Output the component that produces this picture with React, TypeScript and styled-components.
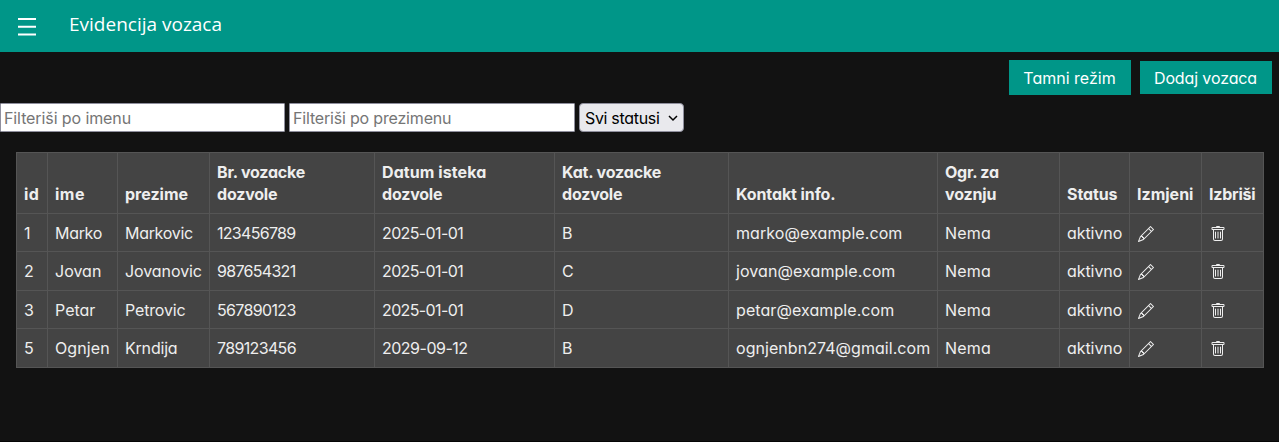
import React from "react";
import styled, { createGlobalStyle } from "styled-components";
import { BsPencil, BsTrash } from "react-icons/bs";

const GlobalStyle = createGlobalStyle`
  * { box-sizing: border-box; }
  body {
    margin: 0;
    background: #121212;
    color: #eee;
    font-family: Inter, "Open Sans", sans-serif;
    font-size: 16px;
    font-feature-settings: "cv11";
  }
`;

const Page = styled.div`
  min-height: 442px;
  border-bottom: 1px solid #060606;
`;

const Header = styled.header`
  display: flex;
  align-items: center;
  height: 52px;
  padding-left: 18px;
  background: #009688;
  color: #fff;
`;

const MenuButton = styled.button`
  display: flex;
  width: 18px;
  height: 18px;
  margin: 1px 33px 0 0;
  padding: 0;
  border: 0;
  background: none;
  color: inherit;
`;

const Title = styled.h1`
  margin: 0 0 5px;
  font: 400 19px/26px "Open Sans", sans-serif;
`;

const Actions = styled.div`
  display: flex;
  justify-content: flex-end;
  align-items: center;
  gap: 9px;
  height: 51px;
  padding-right: 7px;
`;

const ActionButton = styled.button<{ $w: number; $h: number; $track?: number }>`
  width: ${(p) => p.$w}px;
  height: ${(p) => p.$h}px;
  padding: 0 1px 0 0;
  border: 0;
  background: #009688;
  color: #fff;
  font: inherit;
  font-feature-settings: inherit;
  letter-spacing: ${(p) => p.$track ?? 0}px;
`;

const Filters = styled.div`
  display: flex;
  gap: 4px;
  height: 29px;
`;

const FilterInput = styled.input<{ $w: number; $track: number }>`
  width: ${(p) => p.$w}px;
  height: 29px;
  padding: 0 2px 0 3px;
  border: 1px solid #8f8f9d;
  border-radius: 1px;
  background: #fff;
  color: #000;
  font: inherit;
  font-feature-settings: inherit;
  letter-spacing: ${(p) => p.$track}px;
  &::placeholder { color: #757575; opacity: 1; }
`;

const StatusSelect = styled.button`
  display: flex;
  align-items: center;
  justify-content: space-between;
  width: 105px;
  height: 29px;
  padding: 0 5px;
  border: 1px solid #8f8f9d;
  border-radius: 4px;
  background: #e9e9ed;
  color: #000;
  font: inherit;
  font-feature-settings: inherit;
  letter-spacing: -0.32px;
`;

const Table = styled.table`
  width: 1248px;
  margin: 20px 0 0 16px;
  table-layout: fixed;
  border-collapse: collapse;
  background: #444;
`;

const Col = styled.col<{ $w: number }>`
  width: ${(p) => p.$w}px;
`;

const Row = styled.tr<{ $h: number }>`
  height: ${(p) => p.$h}px;
`;

const HeadCell = styled.th`
  padding: 0 0 8px 7px;
  border: 1px solid #555;
  text-align: left;
  vertical-align: bottom;
  font-weight: 700;
  line-height: 22px;
  white-space: nowrap;
`;

const Cell = styled.td`
  padding: 0 0 0 7px;
  border: 1px solid #555;
  vertical-align: middle;
  line-height: 22px;
  white-space: nowrap;
`;

const Text = styled.span<{ $track: number }>`
  display: block;
  letter-spacing: ${(p) => p.$track}px;
`;

const IconSlot = styled.span`
  display: flex;
  padding: 2px 0 0 1px;
`;

type Piece = [text: string, track: number];

const columns: { width: number; lines: Piece[] }[] = [
  { width: 31, lines: [["id", 0.4]] },
  { width: 70, lines: [["ime", 0.5]] },
  { width: 92, lines: [["prezime", 0]] },
  { width: 165, lines: [["Br. vozacke", -0.2], ["dozvole", -0.2]] },
  { width: 180, lines: [["Datum isteka", 0.08], ["dozvole", -0.2]] },
  { width: 174, lines: [["Kat. vozacke", -0.17], ["dozvole", -0.2]] },
  { width: 209, lines: [["Kontakt info.", -0.1]] },
  { width: 122, lines: [["Ogr. za", -0.25], ["voznju", -0.15]] },
  { width: 70, lines: [["Status", -0.1]] },
  { width: 72, lines: [["Izmjeni", 0]] },
  { width: 62, lines: [["Izbriši", -0.25]] },
];

const drivers: { height: number; cells: Piece[] }[] = [
  { height: 38, cells: [["1", 0], ["Marko", -0.3], ["Markovic", -0.3], ["123456789", -0.7], ["2025-01-01", -0.62], ["B", 0], ["marko@example.com", 0.08], ["Nema", 0.2], ["aktivno", -0.07]] },
  { height: 39, cells: [["2", 0], ["Jovan", 0], ["Jovanovic", -0.08], ["987654321", -0.7], ["2025-01-01", -0.62], ["C", 0], ["jovan@example.com", 0.08], ["Nema", 0.2], ["aktivno", -0.07]] },
  { height: 38, cells: [["3", 0], ["Petar", 0], ["Petrovic", -0.16], ["567890123", -0.65], ["2025-01-01", -0.62], ["D", 0], ["petar@example.com", 0.08], ["Nema", 0.2], ["aktivno", -0.07]] },
  { height: 39, cells: [["5", 0], ["Ognjen", 0.1], ["Krndija", -0.2], ["789123456", -0.65], ["2029-09-12", -0.5], ["B", 0], ["ognjenbn274@gmail.com", 0.05], ["Nema", 0.2], ["aktivno", -0.07]] },
];

export default function App() {
  return (
    <>
      <GlobalStyle />
      <Page>
        <Header>
          <MenuButton aria-label="Meni">
            <svg width="18" height="18" viewBox="0 0 18 18" stroke="currentColor" strokeWidth="2">
              <path d="M0 1.1h18M0 8.8h18M0 16.5h18" />
            </svg>
          </MenuButton>
          <Title>Evidencija vozaca</Title>
        </Header>
        <Actions>
          <ActionButton $w={122} $h={35}>Tamni režim</ActionButton>
          <ActionButton $w={132} $h={33} $track={-0.12}>Dodaj vozaca</ActionButton>
        </Actions>
        <Filters>
          <FilterInput $w={285} $track={-0.1} placeholder="Filteriši po imenu" />
          <FilterInput $w={286} $track={-0.18} placeholder="Filteriši po prezimenu" />
          <StatusSelect>
            Svi statusi
            <svg width="10" height="8" viewBox="0 0 10 8" fill="none" stroke="currentColor" strokeWidth="1.5">
              <path d="M1 2l4 4 4-4" />
            </svg>
          </StatusSelect>
        </Filters>
        <Table>
          <colgroup>
            {columns.map((c, i) => <Col key={i} $w={c.width} />)}
          </colgroup>
          <thead>
            <Row $h={61}>
              {columns.map((c, i) => (
                <HeadCell key={i}>
                  {c.lines.map(([t, track]) => <Text key={t} $track={track}>{t}</Text>)}
                </HeadCell>
              ))}
            </Row>
          </thead>
          <tbody>
            {drivers.map((d) => (
              <Row key={d.cells[0][0]} $h={d.height}>
                {d.cells.map(([t, track], i) => (
                  <Cell key={i}><Text $track={track}>{t}</Text></Cell>
                ))}
                <Cell><IconSlot><BsPencil size={16} /></IconSlot></Cell>
                <Cell><IconSlot><BsTrash size={16} /></IconSlot></Cell>
              </Row>
            ))}
          </tbody>
        </Table>
      </Page>
    </>
  );
}
